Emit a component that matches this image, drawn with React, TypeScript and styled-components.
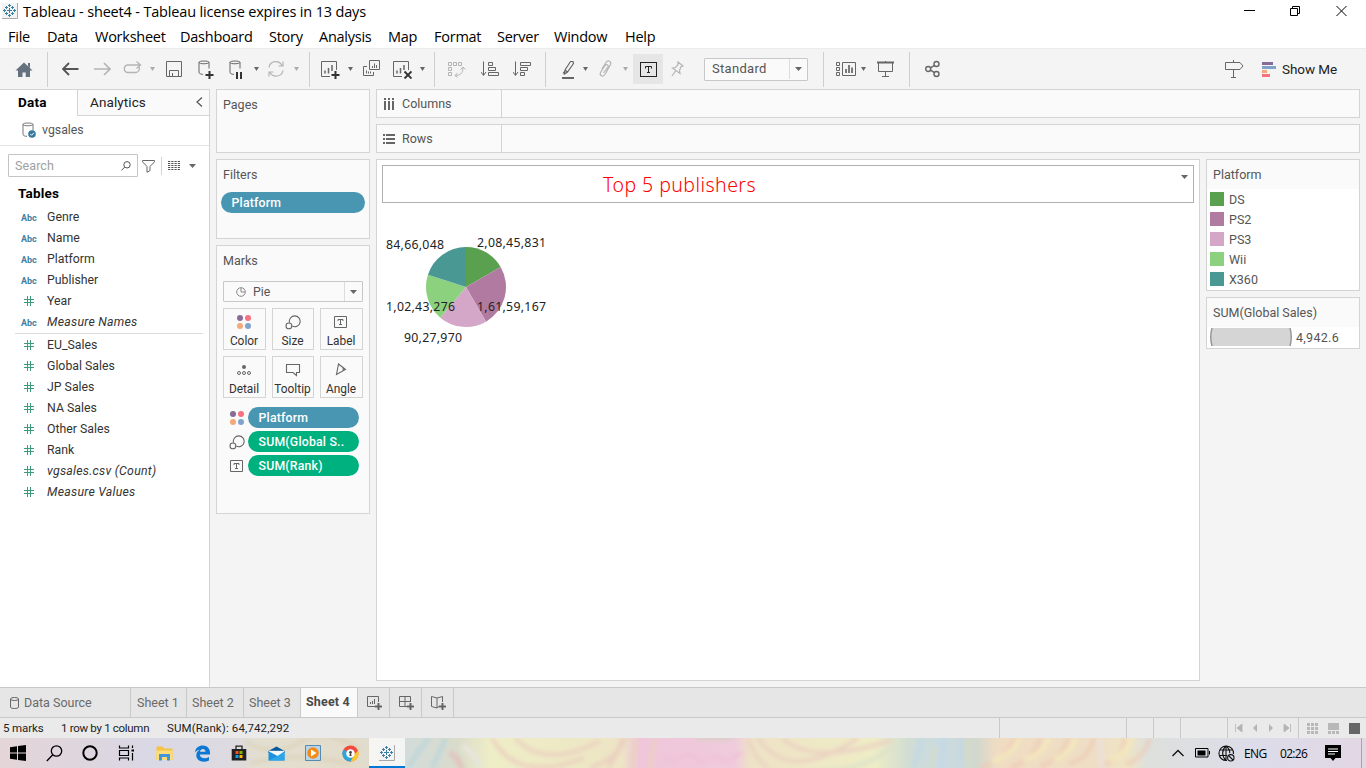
import React from "react";
import styled, { createGlobalStyle, css } from "styled-components";

const ui = `"Open Sans", "Noto Sans", sans-serif`;
const book = `Roboto, "Noto Sans", sans-serif`;

const Global = createGlobalStyle`
  * { box-sizing: border-box; }
  body { margin: 0; background: #f4f4f4; font-family: ${book}; font-size: 12px; color: #333; overflow: hidden; }
`;

const Window = styled.div`
  width: 1366px;
  height: 768px;
  display: flex;
  flex-direction: column;
`;

const Text = styled.span<{ $ls?: number; $ml?: number; $mt?: number; $w?: number }>`
  white-space: nowrap;
  letter-spacing: ${(p) => p.$ls ?? 0}px;
  margin-left: ${(p) => p.$ml ?? 0}px;
  margin-top: ${(p) => p.$mt ?? 0}px;
  ${(p) => p.$w && css`width: ${p.$w}px;`}
`;

const Icon = styled.svg<{ $ml?: number; $c?: string }>`
  display: block;
  flex: none;
  fill: none;
  stroke: ${(p) => p.$c ?? "#666"};
  margin-left: ${(p) => p.$ml ?? 0}px;
`;
const faded = "#b4b4b4";

/* ---------- title and menu ---------- */
const TitleBar = styled.header`
  height: 24px;
  flex: none;
  display: flex;
  align-items: center;
  padding: 0 19px 2px 2px;
  background: #fff;
  font: 14.5px ${ui};
  color: #000;
`;
const WindowButtons = styled.div`
  margin-left: auto;
  display: flex;
  gap: 35px;
`;
const MenuBar = styled.nav`
  height: 24px;
  flex: none;
  display: flex;
  align-items: center;
  padding: 1px 0 0 8px;
  background: #fff;
  font: 14.5px ${ui};
  color: #000;
`;
const MenuItem = styled.span<{ $w: number }>`
  width: ${(p) => p.$w}px;
  white-space: nowrap;
  letter-spacing: -0.25px;
`;

/* ---------- toolbar ---------- */
const Toolbar = styled.div`
  height: 41px;
  flex: none;
  display: flex;
  align-items: center;
  border-top: 1px solid #ececec;
  background: #f4f4f4;
`;
const Separator = styled.i<{ $ml: number; $c?: string }>`
  width: 1px;
  height: 35px;
  margin-left: ${(p) => p.$ml}px;
  background: ${(p) => p.$c ?? "#cfcfcf"};
`;
const ActiveTool = styled.div`
  width: 30px;
  height: 30px;
  margin-left: 5px;
  display: grid;
  place-items: center;
  background: #e6e6e6;
`;
const SelectBox = styled.div<{ $w: number; $h: number; $ml?: number }>`
  width: ${(p) => p.$w}px;
  height: ${(p) => p.$h}px;
  margin-left: ${(p) => p.$ml ?? 0}px;
  display: flex;
  align-items: center;
  border: 1px solid #c8c8c8;
  border-radius: 1px;
  background: #fafafa;
  font-size: 12.3px;
  color: #555;
`;
const ZoomSelect = styled(SelectBox)`
  font-size: 13px;
  padding-bottom: 1px;
`;
const SelectArrow = styled.div`
  width: 18px;
  align-self: stretch;
  margin-left: auto;
  display: grid;
  place-items: center;
  border-left: 1px solid #dcdcdc;
`;
const ShowMe = styled.div`
  margin-left: auto;
  padding-right: 29px;
  display: flex;
  align-items: center;
  font-size: 13.5px;
  color: #222;
`;

/* ---------- workspace ---------- */
const Workspace = styled.main`
  height: 598px;
  flex: none;
  display: flex;
  background: #f4f4f4;
`;
const Sidebar = styled.aside`
  width: 210px;
  flex: none;
  display: flex;
  flex-direction: column;
  background: #fff;
  border: solid #d4d4d4;
  border-width: 1px 1px 0 0;
`;
const PaneTabs = styled.div`
  height: 26px;
  flex: none;
  display: flex;
  font-size: 13.5px;
`;
const DataTab = styled.div`
  width: 77px;
  padding: 4px 0 0 18px;
  font-weight: 700;
  letter-spacing: 0.2px;
  color: #000;
`;
const AnalyticsTab = styled.div`
  flex: 1;
  display: flex;
  justify-content: space-between;
  padding: 4px 6px 0 12px;
  border: solid #d4d4d4;
  border-width: 0 0 1px 1px;
  background: #fafafa;
  color: #222;
`;
const SourceRow = styled.div`
  height: 30px;
  flex: none;
  display: flex;
  align-items: center;
  padding: 0 0 2px 22px;
  gap: 6px;
  border-bottom: 1px solid #e2e2e2;
  font-size: 12.3px;
  color: #555;
`;
const SearchRow = styled.div`
  height: 39px;
  flex: none;
  display: flex;
  align-items: center;
  padding-left: 8px;
`;
const SearchBox = styled.div`
  width: 130px;
  height: 23px;
  display: flex;
  align-items: center;
  justify-content: space-between;
  padding: 0 6px;
  border: 1px solid #c4c4c4;
  border-radius: 1px;
  font-size: 12.5px;
  color: #a0a0a0;
`;
const ThinRule = styled.i`
  width: 1px;
  height: 18px;
  margin: 0 6px;
  background: #d4d4d4;
`;
const TablesTitle = styled.h2`
  height: 21px;
  margin: 0;
  padding: 0 0 0 18px;
  font: 700 13.5px/16px ${book};
  letter-spacing: 0.2px;
  color: #000;
`;
const FieldGroup = styled.ul<{ $ruled?: boolean }>`
  list-style: none;
  margin: 0 6px 0 15px;
  padding: 0;
  ${(p) => p.$ruled && css`border-bottom: 1px solid #dcdcdc; padding-bottom: 1px;`}
`;
const FieldRow = styled.li<{ $italic?: boolean }>`
  height: 21px;
  display: flex;
  align-items: center;
  font-size: 12.3px;
  font-style: ${(p) => (p.$italic ? "italic" : "normal")};
  letter-spacing: ${(p) => (p.$italic ? 0.25 : 0)}px;
  color: #333;
`;
const FieldType = styled.span<{ $hash?: boolean }>`
  width: 32px;
  padding-left: ${(p) => (p.$hash ? 9 : 6)}px;
  padding-top: ${(p) => (p.$hash ? 1 : 2)}px;
  font: 700 9px ${book};
  letter-spacing: 0;
  color: #44819e;
  svg { display: block; }
`;

const CardColumn = styled.section<{ $w: number; $ml: number }>`
  width: ${(p) => p.$w}px;
  margin-left: ${(p) => p.$ml}px;
  display: flex;
  flex-direction: column;
  gap: 6px;
`;
const Card = styled.div<{ $h: number }>`
  height: ${(p) => p.$h}px;
  flex: none;
  border: 1px solid #d4d4d4;
  background: #fafafa;
`;
const CardTitle = styled.div`
  height: 29px;
  line-height: 29px;
  padding-left: 6px;
  font-size: 12.5px;
  color: #555;
`;
const Pill = styled.div<{ $green?: boolean; $w: number }>`
  width: ${(p) => p.$w}px;
  height: 21px;
  padding-left: 10.5px;
  border-radius: 11px;
  line-height: 22.5px;
  white-space: nowrap;
  background: ${(p) => (p.$green ? "#00b180" : "#4996b2")};
  color: #fff;
  font-size: 12.3px;
  font-weight: 500;
  letter-spacing: 0.2px;
`;
const FilterShelf = styled.div`
  padding: 3px 0 0 4px;
`;
const MarksBody = styled.div`
  padding: 6px 6px 0;
`;
const MarkGrid = styled.div`
  display: grid;
  grid-template-columns: 43px 42px 43px;
  grid-auto-rows: 42px;
  gap: 6px;
  margin: 6px 0 9px;
`;
const MarkButton = styled.div`
  display: flex;
  flex-direction: column;
  align-items: center;
  gap: 3px;
  padding: 5px 1px 0 0;
  border: 1px solid #d4d4d4;
  font-size: 11.9px;
  line-height: 16px;
  color: #333;
`;
const MarkRow = styled.div`
  display: flex;
  align-items: center;
  margin: 0 0 3px 6px;
  gap: 3px;
`;
const Shelf = styled.div`
  width: 984px;
  height: 29px;
  display: flex;
  border: 1px solid #d4d4d4;
  background: #fafafa;
  color: #555;
  font-size: 12.5px;
`;
const ShelfName = styled.div`
  width: 125px;
  display: flex;
  align-items: center;
  gap: 7px;
  padding-left: 6px;
  border-right: 1px solid #d4d4d4;
`;
const Content = styled.section`
  margin-left: 6px;
  display: flex;
  flex-direction: column;
  gap: 6px;
`;
const ViewRow = styled.div`
  display: flex;
  gap: 6px;
`;
const View = styled.div`
  width: 824px;
  height: 522px;
  padding: 5px;
  border: 1px solid #d4d4d4;
  background: #fff;
`;
const SheetTitle = styled.div`
  height: 38px;
  display: flex;
  align-items: center;
  justify-content: space-between;
  padding-left: 220px;
  border: 1px solid #b0b0b0;
  font: 300 19.5px "Noto Sans", ${book};
  color: #f00;
`;
const TitleMenu = styled.div`
  align-self: start;
  padding: 9px 5px;
`;
const LegendBody = styled.div`
  background: #fff;
  height: 101px;
`;
const LegendItem = styled.div`
  height: 20px;
  display: flex;
  align-items: center;
  gap: 5px;
  padding-left: 3px;
  font-size: 12.5px;
  color: #555;
`;
const Swatch = styled.i<{ $c: string }>`
  width: 14px;
  height: 14px;
  background: ${(p) => p.$c};
`;
const SizeBody = styled.div`
  height: 21px;
  display: flex;
  align-items: center;
  gap: 4px;
  padding: 0 0 1px 3px;
  background: #fff;
  font-size: 12.5px;
  letter-spacing: 0.3px;
  color: #555;
`;

/* ---------- footer ---------- */
const SheetTabs = styled.div`
  height: 31px;
  flex: none;
  display: flex;
  border: solid #c9c9c9;
  border-width: 1px 0;
  background: #e6e6e6;
`;
const SheetTab = styled.div<{ $w: number; $pl: number; $active?: boolean }>`
  width: ${(p) => p.$w}px;
  padding: 0 0 ${(p) => (p.$active ? 2 : 0)}px ${(p) => p.$pl}px;
  display: flex;
  align-items: center;
  gap: 5px;
  white-space: nowrap;
  border-right: 1px solid #c9c9c9;
  background: ${(p) => (p.$active ? "#fafafa" : "transparent")};
  font-size: 12.5px;
  font-weight: ${(p) => (p.$active ? 700 : 400)};
  letter-spacing: ${(p) => (p.$active ? 0.15 : 0)}px;
  color: ${(p) => (p.$active ? "#4a4a4a" : "#6a6a6a")};
`;
const StatusBar = styled.div`
  height: 20px;
  flex: none;
  display: flex;
  align-items: center;
  padding-left: 3px;
  background: #eaeaea;
  font-size: 11.5px;
  color: #222;
`;
const StatusText = styled.span<{ $w: number; $ls?: number }>`
  width: ${(p) => p.$w}px;
  white-space: nowrap;
  letter-spacing: ${(p) => p.$ls ?? 0}px;
`;
const StatusCell = styled.div<{ $w: number }>`
  width: ${(p) => p.$w}px;
  height: 20px;
  display: flex;
  align-items: center;
  border-left: 1px solid #c9c9c9;
`;
const Taskbar = styled.footer`
  height: 30px;
  flex: none;
  position: relative;
  overflow: hidden;
`;
const Wallpaper = styled.svg`
  display: block;
`;
const TaskItems = styled.div`
  position: absolute;
  inset: 0;
  display: flex;
  align-items: center;
  font: 12px ${ui};
  color: #000;
`;
const TaskButton = styled.div<{ $w: number; $on?: boolean }>`
  width: ${(p) => p.$w}px;
  height: 30px;
  display: grid;
  place-items: center;
  ${(p) => p.$on && css`background: rgba(255,255,255,.72); border-bottom: 2px solid #0078d7; padding-top: 1px;`}
`;
const Tray = styled.div`
  margin-left: auto;
  width: 194px;
  height: 30px;
  display: flex;
  align-items: center;
`;

/* ---------- shared drawings ---------- */
const Caret = ({ ml = 0, c = "#666", w = 5 }: { ml?: number; c?: string; w?: number }) => (
  <Icon $ml={ml} $c="none" width={w} height="4" viewBox="0 0 7 4" preserveAspectRatio="none"><path d="M0 0h7L3.5 4z" fill={c} /></Icon>
);
const LogoMark = () => (
  <svg width="16" height="16" viewBox="0 0 16 16" fill="none" stroke="#3c7fa3" strokeWidth="1">
    <path d="M0 0h16v16H0z" fill="#f3f3f3" stroke="none" />
    <path d="M15.5 0v15.5H0" stroke="#aaa" />
    <path d="M7.5 5v5M5 7.5h5M7.5 1v3M6 2.500h3M7.500 11v3M6 12.500h3M2.500 6v3M1 7.500h3M12.500 6v3M11 7.500h3M4.500 3v3M3 4.500h3M10.500 3v3M9 4.500h3M4.500 9v3M3 10.500h3M10.500 9v3M9 10.500h3" />
  </svg>
);
const Dots = () => (
  <svg width="16" height="16" viewBox="0 0 16 16">
    <circle cx="4" cy="4" r="3" fill="#866c96" /><circle cx="12" cy="4" r="3" fill="#f9707e" />
    <circle cx="4" cy="12" r="3" fill="#f5a878" /><circle cx="12" cy="12" r="3" fill="#80a2cb" />
  </svg>
);
const SizeGlyph = () => (
  <svg width="16" height="16" viewBox="0 0 16 16" fill="none" stroke="#666" strokeWidth="1.1">
    <path d="M4.500 8.600a5.400 5.400 0 1 1 2.800 3.500" /><circle cx="3.900" cy="11.900" r="2.900" />
  </svg>
);
const LabelGlyph = ({ w = 14, h = 12, c = "#666" }: { w?: number; h?: number; c?: string }) => (
  <svg width={w} height={h} viewBox={`0 0 ${w} ${h}`} fill="none" stroke={c}>
    <rect x=".5" y=".5" width={w - 1} height={h - 1} />
    <path d={`M${w / 2 - 3} ${h / 2 - 1}v-2h6v2M${w / 2} ${h / 2 - 3}v6M${w / 2 - 1.5} ${h / 2 + 3}h3`} />
  </svg>
);
const SmallLabelGlyph = () => (
  <svg width="16" height="16" viewBox="-1 -2 16 16" fill="none" stroke="#666"><path d="M.5.5h12v11H.5zM4 5V3.500h5V5M6.500 3.500v5.500M5 8.500h3" /></svg>
);
const Cylinder = () => <path d="M1 3.300v10c0 1.300 1.500 1.900 4 2.100M11 3.300v6.200M1 3.300C1 1.600 11 1.600 11 3.300S1 5.500 1 3.300z" />;
const Hash = () => (
  <svg width="10" height="10" viewBox="0 0 10 10" stroke="#3a9c7b" strokeWidth="1"><path d="M3.500 0v10M6.500 0v10M0 3.500h10M0 6.500h10" /></svg>
);

const dimensions = ["Genre", "Name", "Platform", "Publisher", "Year", "Measure Names"];
const measures = ["EU_Sales", "Global Sales", "JP Sales", "NA Sales", "Other Sales", "Rank", "vgsales.csv (Count)", "Measure Values"];
const italics = ["Measure Names", "vgsales.csv (Count)", "Measure Values"];
const menu: [string, number][] = [
  ["File", 39], ["Data", 48], ["Worksheet", 85], ["Dashboard", 89], ["Story", 50],
  ["Analysis", 69], ["Map", 46], ["Format", 63], ["Server", 57], ["Window", 71], ["Help", 40],
];
const platforms: [string, string][] = [["DS", "#59a14f"], ["PS2", "#b07aa1"], ["PS3", "#d4a6c8"], ["Wii", "#8cd17d"], ["X360", "#499894"]];

const slices: [string, number, number][] = [["#59a14f", 0, 60], ["#b07aa1", 60, 150], ["#d4a6c8", 150, 220], ["#8cd17d", 220, 288], ["#499894", 288, 360]];
const point = (deg: number) => {
  const r = (deg * Math.PI) / 180;
  return `${84 + 40 * Math.sin(r)} ${84 - 40 * Math.cos(r)}`;
};
const labels: [string, number, number, number][] = [
  ["84,66,048", 4, 46, 58], ["2,08,45,831", 95, 44, 69], ["1,02,43,276", 4, 108, 69], ["1,61,59,167", 95, 108, 69], ["90,27,970", 22, 139, 58],
];

const Chart = styled.svg`
  display: block;
  font: 12.3px "Noto Sans", sans-serif;
`;
const PieChart = () => (
  <Chart width="200" height="160" viewBox="0 0 200 160">
    {slices.map(([c, a, b]) => <path key={c} d={`M84 84L${point(a)}A40 40 0 0 1 ${point(b)}z`} fill={c} />)}
    {labels.map(([t, x, y, w]) => <text key={t} x={x} y={y} textLength={w} fill="#222">{t}</text>)}
  </Chart>
);

const MainToolbar = () => (
  <Toolbar>
    <Icon $ml={15} $c="none" width="18" height="20"><path d="M9 3.500 17.500 11.500H15V18h-4.300v-4.500H7.500V18H3v-6.500H.5zM13 4h2v5l-2-2z" fill="#64717f" /></Icon>
    <Separator $ml={14} />
    <Icon $ml={14} $c="#555" width="17" height="20" strokeWidth="1.800"><path d="M1 10h15.500M7 4 1 10l6 6" /></Icon>
    <Icon $ml={15} $c={faded} width="17" height="20" strokeWidth="1.600"><path d="M0 10h15.500M10 4l6 6-6 6" /></Icon>
    <Icon $ml={12} $c={faded} width="19" height="20" strokeWidth="1.300"><path d="M9 6H4.500a3.800 3.800 0 0 0 0 7.500H13A3.800 3.800 0 0 0 16 8M8 6h9M13.500 2.500 17.500 6l-4 3.500" /></Icon>
    <Caret ml={8} c="#aaa" />
    <Icon $ml={11} width="16" height="20"><path d="M.5 2.500h15v15H.5zM3.500 17.500v-6h9v6M6.500 14v3.500" /></Icon>
    <Icon $ml={16} width="16" height="20"><Cylinder /><path d="M11.500 12v8M7.500 16h8" stroke="#333" strokeWidth="2" /></Icon>
    <Icon $ml={15} width="16" height="20"><Cylinder /><path d="M8 13v7M12 13v7" stroke="#333" strokeWidth="2" /></Icon>
    <Caret ml={9} />
    <Icon $ml={8} $c={faded} width="18" height="20" strokeWidth="1.200"><path d="M2 8.500C3 1.500 12 .5 15 6.500M16 11.500c-1 6.500-10 7.500-13 2M16 2.500v4.500h-4.500M2 17.500v-4.500h4.500" /></Icon>
    <Caret ml={9} c="#aaa" />
    <Separator $ml={10} />
    <Icon $ml={10} width="20" height="20"><path d="M10 17.500H1.500V2.500h15V11" /><path d="M5 14.500v-3M8.500 14.500V9M12 12V6" strokeWidth="1.500" /><path d="M15.500 12v8M11.500 16h8" stroke="#333" strokeWidth="2" /></Icon>
    <Caret ml={8} />
    <Icon $ml={10} width="18" height="20"><path d="M6.500 1.500h10v9h-10zM4 7.500H.5v9h10V13M9.500 9V7M11.500 9V4.500M13.500 9V6M3.500 14.500v-3M5.500 14.500v-2M7.500 14.500v-2" /></Icon>
    <Icon $ml={12} width="19" height="20"><path d="M9 17.500H.5V2.500h15V11" /><path d="M4 14.500v-3M7.500 14.500V9M11 11V6" strokeWidth="1.500" /><path d="m11.500 12.500 7 7m0-7-7 7" stroke="#333" strokeWidth="1.900" /></Icon>
    <Caret ml={8} />
    <Separator $ml={9} />
    <Icon $ml={13} $c={faded} width="18" height="20"><path d="M.5 3.500h3v3h-3zM5.500 3.500h3v3h-3zM10.500 3.500h3v3h-3zM.5 8.500h3v3h-3zM.5 13.500h3v3h-3zM7 16.500c5 0 8-2 8-8M9.500 14 7 16.500l2.500 2M12.500 10.500l2.500-2.500 2.500 2.500" /></Icon>
    <Icon $ml={15} width="18" height="20"><path d="M2.500 2.500V16M0 13l2.500 3.500L5 13M7.500 3.500h4v3h-4zM7.500 8.500h7v3h-7zM7.500 13.500h10v3h-10z" /></Icon>
    <Icon $ml={14} width="18" height="20"><path d="M2.500 2.500V16M0 13l2.500 3.500L5 13M7.500 3.500h10v3h-10zM7.500 8.500h7v3h-7zM7.500 13.500h4v3h-4z" /></Icon>
    <Separator $ml={14} />
    <Icon $ml={16} width="13" height="20"><path d="m3 11 5.500-8.500h2.500l.5 2-6 8.500-3 2zM3 11l2.500 2M1 14.500l1.500-2" strokeWidth="1.200" /><path d="M0 19h12" strokeWidth="2" /></Icon>
    <Caret ml={8} />
    <Icon $ml={11} $c={faded} width="13" height="20" strokeWidth="1.200"><path d="m3 10 4-6.500c2-3 6-1 4.500 2L6 15.500c-2 3-6 1-4.500-2L6 6.500c1.500-2 4-.5 3 1.500L4.500 14" /></Icon>
    <Caret ml={11} c="#aaa" />
    <ActiveTool><LabelGlyph w={17} h={15} c="#222" /></ActiveTool>
    <Icon $ml={8} $c={faded} width="13" height="20" strokeWidth="1.200"><path d="m7 3 5 4-2 .5-1.500 4 .5 3-7.500-5.500 3-.5L7 5.500zM4.500 12 1 17" /></Icon>
    <ZoomSelect $ml={20} $w={104} $h={23}><Text $ml={7} $ls={0.3}>Standard</Text><SelectArrow><Caret w={7} /></SelectArrow></ZoomSelect>
    <Separator $ml={15} />
    <Icon $ml={12} width="20" height="20"><path d="M.5 3.500h3v3h-3zM.5 8.500h3v3h-3zM.5 13.500h3v3h-3zM6.500 3.500h13v13h-13z" /><path d="M10 14v-4M13 14V6M16 14V8.500" strokeWidth="1.700" /></Icon>
    <Caret ml={5} />
    <Icon $ml={11} width="17" height="20"><path d="M0 3.500h17" strokeWidth="2" /><path d="M1.500 4v8.500h14V4M8.500 2v1M8.500 13v4.500M5 17.500h7" /></Icon>
    <Separator $ml={15} />
    <Icon $ml={15} width="15" height="20" strokeWidth="1.400"><circle cx="3.200" cy="10" r="2.500" /><circle cx="11.500" cy="5" r="2.500" /><circle cx="11.500" cy="15" r="2.500" /><path d="m5.500 8.800 4-2.500M5.500 11.200l4 2.500" /></Icon>
    <ShowMe>
      <Icon width="19" height="20"><path d="M.5 3.500H15l3 3.500-3 3.500H.5zM8.500 1v2M8.500 11v7.500M6 18.500h5" /></Icon>
      <Icon $ml={18} $c="none" width="14" height="16"><path d="M0 1h11v3H0z" fill="#866c96" /><path d="M0 5h14v3H0z" fill="#80a2cb" /><path d="M0 9h5v3H0z" fill="#f5a878" /><path d="M0 13h8v3H0z" fill="#f9707e" /></Icon>
      <Text $ml={6} $ls={-0.1}>Show Me</Text>
    </ShowMe>
  </Toolbar>
);

const DataPane = () => (
  <Sidebar>
    <PaneTabs>
      <DataTab>Data</DataTab>
      <AnalyticsTab><Text $ls={0.1}>Analytics</Text><svg width="7" height="14" viewBox="0 -3 7 14" fill="none" stroke="#555" strokeWidth="1.200"><path d="M6 .5 1 5l5 4.500" /></svg></AnalyticsTab>
    </PaneTabs>
    <SourceRow>
      <svg width="14" height="18" viewBox="0 0 14 18" fill="none" stroke="#777"><Cylinder /><circle cx="10" cy="13" r="3.800" fill="#35799c" stroke="none" /><path d="m8.300 13 1.300 1.300 2.200-2.500" stroke="#fff" /></svg>
      <Text>vgsales</Text>
    </SourceRow>
    <SearchRow>
      <SearchBox><Text $ls={0.1}>Search</Text><svg width="10" height="10" viewBox="0 0 10 10" fill="none" stroke="#555"><circle cx="6" cy="3.800" r="3.200" /><path d="M3.700 6.200.5 9.300" /></svg></SearchBox>
      <Icon $ml={4} width="13" height="14"><path d="M.5 1.500h12v1.300L8 7.500v4l-3 1.800V7.500L.5 2.800z" /></Icon>
      <ThinRule />
      <Icon width="12" height="9" $c="#555" strokeDasharray="2.250 1"><path d="M0 .5h12M0 2.500h12M0 4.500h12M0 6.500h12M0 8.500h12" /></Icon>
      <Caret ml={9} w={7} />
    </SearchRow>
    <TablesTitle>Tables</TablesTitle>
    <FieldGroup $ruled>
      {dimensions.map((d) => (
        <FieldRow key={d} $italic={italics.includes(d)}><FieldType $hash={d === "Year"}>{d === "Year" ? <Hash /> : "Abc"}</FieldType>{d}</FieldRow>
      ))}
    </FieldGroup>
    <FieldGroup>
      {measures.map((m) => (
        <FieldRow key={m} $italic={italics.includes(m)}><FieldType $hash><Hash /></FieldType>{m}</FieldRow>
      ))}
    </FieldGroup>
  </Sidebar>
);

const Cards = () => (
  <CardColumn $w={154} $ml={6}>
    <Card $h={64}><CardTitle>Pages</CardTitle></Card>
    <Card $h={80}><CardTitle>Filters</CardTitle><FilterShelf><Pill $w={144}>Platform</Pill></FilterShelf></Card>
    <Card $h={269}>
      <CardTitle>Marks</CardTitle>
      <MarksBody>
        <SelectBox $w={140} $h={21}>
          <Icon $ml={12} $c="#888" width="10" height="10"><circle cx="5" cy="5" r="4.300" /><path d="M5 1v4h4" /></Icon>
          <Text $ml={7}>Pie</Text>
          <SelectArrow><Caret w={7} /></SelectArrow>
        </SelectBox>
        <MarkGrid>
          <MarkButton><Dots />Color</MarkButton>
          <MarkButton><SizeGlyph />Size</MarkButton>
          <MarkButton><SmallLabelGlyph />Label</MarkButton>
          <MarkButton><svg width="16" height="16" viewBox="0 0 16 16" fill="none" stroke="#666"><circle cx="8" cy="5" r="2" fill="#666" stroke="none" /><circle cx="3" cy="11" r="1.500" /><circle cx="8" cy="11" r="1.500" /><circle cx="13" cy="11" r="1.500" /></svg>Detail</MarkButton>
          <MarkButton><svg width="16" height="16" viewBox="0 0 16 16" fill="none" stroke="#666" strokeWidth="1.100"><path d="M1.500 2.500h13v8h-3v3l-3.500-3H1.500z" /></svg>Tooltip</MarkButton>
          <MarkButton><svg width="16" height="16" viewBox="0 0 16 16" fill="none" stroke="#666" strokeWidth="1.100"><path d="M5.500 2 12.500 7.500 3.500 12.500zM10 5q.5 2 0 4" /></svg>Angle</MarkButton>
        </MarkGrid>
        <MarkRow><Dots /><Pill $w={111}>Platform</Pill></MarkRow>
        <MarkRow><SizeGlyph /><Pill $w={111} $green>SUM(Global S..</Pill></MarkRow>
        <MarkRow><SmallLabelGlyph /><Pill $w={111} $green>SUM(Rank)</Pill></MarkRow>
      </MarksBody>
    </Card>
  </CardColumn>
);

const Wall = () => (
  <Wallpaper width="1366" height="30" viewBox="0 0 1366 30">
    <defs>
      <linearGradient id="wall" x1="0" x2="1366" y1="0" y2="0" gradientUnits="userSpaceOnUse">
        <stop offset="0" stopColor="#e4d5d8" /><stop offset=".07" stopColor="#ddd6df" /><stop offset=".11" stopColor="#d9d8e5" />
        <stop offset=".17" stopColor="#dddae0" /><stop offset=".19" stopColor="#e3dfd0" /><stop offset=".26" stopColor="#e3dccb" />
        <stop offset=".3" stopColor="#d3dcda" /><stop offset=".335" stopColor="#dadccb" /><stop offset=".36" stopColor="#eeeec6" />
        <stop offset=".44" stopColor="#ede6c4" /><stop offset=".455" stopColor="#eee4c6" /><stop offset=".468" stopColor="#efc6da" />
        <stop offset=".538" stopColor="#efcbdc" /><stop offset=".55" stopColor="#eee3c6" /><stop offset=".64" stopColor="#eeedc5" />
        <stop offset=".665" stopColor="#d1ddd3" /><stop offset=".69" stopColor="#c9dbe3" /><stop offset=".715" stopColor="#d2d8cd" />
        <stop offset=".73" stopColor="#f0dcc2" /><stop offset=".8" stopColor="#eedec5" /><stop offset=".825" stopColor="#efe4c4" />
        <stop offset=".84" stopColor="#dde0dc" /><stop offset=".92" stopColor="#dddcea" /><stop offset="1" stopColor="#e2d7e3" />
      </linearGradient>
      <filter id="soft" x="-5%" y="-50%" width="110%" height="200%"><feGaussianBlur stdDeviation="2.200" /></filter>
    </defs>
    <path fill="url(#wall)" d="M0 0h1366v30H0z" />
    <g filter="url(#soft)" fill="none">
      <path d="M245 4q30 16 55 0t60 8M250 26q40-14 100 0" stroke="#dbd1b8" strokeWidth="3" />
      <path d="M408 30q15-25 22-30M432 30l14-30" stroke="#c0d6d8" strokeWidth="5" />
      <path d="M450 14q10 8 12 18" stroke="#e0c4c0" strokeWidth="6" /><path d="M462 8q14 8 18 22" stroke="#e6e6dc" strokeWidth="6" />
      <path d="M492 0q25 46 92 20M515 0q30 32 85 3" stroke="#ebd2c0" strokeWidth="4" />
      <path d="m608 30 18-30M590 30q30-10 32-30M632 30l4-30M650 30l5-30" stroke="#ead0c0" strokeWidth="4" />
      <path d="M697 0h35" stroke="#d5cfc2" strokeWidth="4" />
      <path d="M664 18l10 5 14-8 12 9 15-6 12 6 15-10" stroke="#f0c0d8" strokeWidth="3" />
      <path d="M748 0q6 20 20 30M758 0q30 46 100 0M782 0q30 28 110 2" stroke="#ebd3c2" strokeWidth="4" />
      <path d="M808 34q60 0 90-30" stroke="#dde2c9" strokeWidth="4" />
      <path d="M922 0l-8 30M944 0l-4 30M960 0v30" stroke="#c4d8e4" strokeWidth="5" />
      <path d="M935 8l-3 22M968 0v30" stroke="#d6dac6" strokeWidth="4" />
      <path d="M980 30q28-10 34-30M1010 30q24-8 30-30M1040 28q22-6 28-28M1068 26q20-4 26-26M1100 28q20-4 25-28M1126 26q18-6 24-26" stroke="#eec6b4" strokeWidth="4" opacity=".7" />
      <path d="M992 24q22-8 28-24M1024 22q20-6 25-22M1054 22q16-6 22-22M1110 22q16-6 22-22" stroke="#f3e8bd" strokeWidth="5" />
      <path d="M1099 0l4 30" stroke="#ecdfe0" strokeWidth="4" />
    </g>
  </Wallpaper>
);

const WindowsTaskbar = () => (
  <Taskbar>
    <Wall />
    <TaskItems>
      <TaskButton $w={36}><svg width="16" height="16" viewBox="0 0 16 16"><path d="M0 2.300 7 1.300v6.200H0zM8 1.100 16 0v7.500H8zM0 8.500h7v6.200l-7-1zM8 8.500h8V16l-8-1.100z" /></svg></TaskButton>
      <TaskButton $w={36}><svg width="17" height="17" viewBox="0 0 17 17" fill="none" stroke="#000" strokeWidth="1.300"><circle cx="10.500" cy="6" r="5.200" /><path d="M6.800 9.700.8 16" /></svg></TaskButton>
      <TaskButton $w={36}><svg width="16" height="16" viewBox="0 0 16 16" fill="none" stroke="#000" strokeWidth="2"><circle cx="8" cy="8" r="6.700" /></svg></TaskButton>
      <TaskButton $w={36}><svg width="17" height="16" viewBox="0 0 17 16" fill="none" stroke="#000" strokeWidth="1.200"><path d="M1.500.5V3h9V.5M1.500 5.500h9v5h-9zM1.500 15.500V13h9v2.500M14.500.5v2.500M14.500 8v7.500" /><path d="M13.500 5.500h2.500" strokeWidth="2" /></svg></TaskButton>
      <TaskButton $w={41}><svg width="17" height="15" viewBox="0 0 17 15"><path d="M.5.5h6l1.500 2h8.500V14H.5z" fill="#f5c343" /><path d="M.5 4.500h16V14H.5z" fill="#fddc7a" /><path d="M3 14.500V8h11v6.500h-3V11H6v3.500z" fill="#3f96dc" /></svg></TaskButton>
      <TaskButton $w={34}><svg width="17" height="17" viewBox="0 0 17 17"><path d="M1 7.500C1.500 2.500 5 .5 8.700.5c4.800 0 7.300 3.500 7.300 7v2H5.800c.2 4 5.500 4.700 9.200 2.500v3.500C9 18.500 2 16 2.300 10c.1-2.500 1.500-4.300 3.500-5.300C3.500 5 2 6 1 7.500zM6 6.800h5.500C11.500 3.200 6.500 3 6 6.800z" fill="#0a78d4" /></svg></TaskButton>
      <TaskButton $w={39}><svg width="16" height="16" viewBox="0 0 16 16"><path d="M.7 4h14.600v11.500H.7z" fill="#222" /><path d="M5 4V1.200h6V4" fill="none" stroke="#222" strokeWidth="1.300" /><path d="M4.500 6h3v3h-3z" fill="#f25022" /><path d="M8.500 6h3v3h-3z" fill="#7fba00" /><path d="M4.500 10h3v3h-3z" fill="#00a4ef" /><path d="M8.500 10h3v3h-3z" fill="#ffb900" /></svg></TaskButton>
      <TaskButton $w={36}><svg width="17" height="15" viewBox="0 0 17 15"><path d="M.5 5 8.500.5l8 4.500v2H.5z" fill="#075a9f" /><path d="M1 4.800h15v5H1z" fill="#f4f6f8" /><path d="m.5 5.200 9.500 5 6.500-5v9.300H.5z" fill="#1c91df" /><path d="m.5 14.500 9-4.500 7-4.500v9z" fill="#2ba6e8" /></svg></TaskButton>
      <TaskButton $w={38}><svg width="16" height="16" viewBox="0 0 16 16"><path d="M.5.5h15v15H.5z" fill="#b7d6ec" stroke="#568ab1" /><circle cx="8" cy="8" r="5.800" fill="#f28b18" /><path d="m6 4.500 5.500 3.500L6 11.500z" fill="#fff" /></svg></TaskButton>
      <TaskButton $w={37}><svg width="17" height="17" viewBox="0 0 17 17"><circle cx="8.500" cy="8.500" r="8" fill="#f04b3c" /><path d="M1.500 4.500A8 8 0 0 0 8.500 16.500l3.500-6z" fill="#2ba6de" /><path d="M16 5.500a8 8 0 0 1-7.500 11l4-7z" fill="#ffc825" /><circle cx="8.500" cy="8.500" r="4.300" fill="#fff" /><circle cx="8.500" cy="7.300" r="1.300" fill="#444" /><path d="M8 7.500h1l.6 3.500H7.400z" fill="#444" /></svg></TaskButton>
      <TaskButton $w={36} $on><LogoMark /></TaskButton>
      <Tray>
        <Icon $c="#111" width="12" height="8" strokeWidth="1.300"><path d="M.5 7 6 1.500 11.500 7" /></Icon>
        <Icon $ml={11} $c="#000" width="15" height="10"><path d="M.5.5h12.500v8.500H.5zM14.500 3v3.500" /><path d="M2.500 2.500h8v5h-8z" fill="#000" stroke="none" /></Icon>
        <Icon $ml={8} $c="#111" width="17" height="17" strokeWidth="1.100"><path d="M9 15.500A7.300 7.300 0 1 1 15.500 9M8 .8C3.500 5 3.500 11 8 15.500M8 .8c3 2.500 4 5 3.800 7.500M1.500 5h13M1 10.500h8M8 .8v14.500" /><circle cx="12.800" cy="12.800" r="3.200" /><path d="m10.500 10.500 4.500 4.500" /></Icon>
        <Text $ml={9} $w={36} $ls={-0.6}>ENG</Text>
        <Text $w={45} $ls={-0.7}>02:26</Text>
        <Icon $c="none" width="16" height="17"><path d="M0 0h16v13h-5.500L8 16l-2.500-3H0z" fill="#000" /><path d="M3 4h10M3 6.500h10M3 9h7" stroke="#fff" /></Icon>
        <Separator $ml={20} $c="#aaa4ad" />
      </Tray>
    </TaskItems>
  </Taskbar>
);

export default function App() {
  return (
    <Window>
      <Global />
      <TitleBar>
        <LogoMark />
        <Text $ml={5} $ls={-0.17}>Tableau - sheet4 - Tableau license expires in 13 days</Text>
        <WindowButtons>
          <Icon $c="#000" width="11" height="11"><path d="M0 4.500h11" /></Icon>
          <Icon $c="#000" width="11" height="11"><path d="M.5 2.500h7v7h-7zM2.500 2.500v-2h7v7h-2" /></Icon>
          <Icon $c="#000" width="11" height="11"><path d="m.5 0 10 10m0-10-10 10" /></Icon>
        </WindowButtons>
      </TitleBar>
      <MenuBar>{menu.map(([t, w]) => <MenuItem key={t} $w={w}>{t}</MenuItem>)}</MenuBar>
      <MainToolbar />
      <Workspace>
        <DataPane />
        <Cards />
        <Content>
          <Shelf><ShelfName><svg width="12" height="12" viewBox="0 0 12 12" fill="#666"><path d="M1 0h2v2H1zM5 0h2v2H5zM9 0h2v2H9zM1 3h2v9H1zM5 3h2v9H5zM9 3h2v9H9z" /></svg><Text>Columns</Text></ShelfName></Shelf>
          <Shelf><ShelfName><svg width="12" height="12" viewBox="0 0 12 12" fill="#666"><path d="M0 1h2v2H0zM3 1h9v2H3zM0 5h2v2H0zM3 5h9v2H3zM0 9h2v2H0zM3 9h9v2H3z" /></svg><Text>Rows</Text></ShelfName></Shelf>
          <ViewRow>
            <View>
              <SheetTitle><Text $ls={0.45}>Top 5 publishers</Text><TitleMenu><Caret w={7} /></TitleMenu></SheetTitle>
              <PieChart />
            </View>
            <CardColumn $w={154} $ml={0}>
              <Card $h={132}>
                <CardTitle>Platform</CardTitle>
                <LegendBody>{platforms.map(([n, c]) => <LegendItem key={n}><Swatch $c={c} />{n}</LegendItem>)}</LegendBody>
              </Card>
              <Card $h={52}>
                <CardTitle>SUM(Global Sales)</CardTitle>
                <SizeBody><svg width="82" height="18" viewBox="0 0 82 18"><path d="M1 0h80v18H1z" fill="#d5d5d5" /><path d="M2 0Q-.5 9 2 18M80 0q2.500 9 0 18" fill="none" stroke="#999" strokeWidth="1.500" /></svg>4,942.6</SizeBody>
              </Card>
            </CardColumn>
          </ViewRow>
        </Content>
      </Workspace>
      <SheetTabs>
        <SheetTab $w={131} $pl={10}><svg width="9" height="12" viewBox="0 0 9 12" fill="none" stroke="#666"><path d="M.5 2v8c0 2 8 2 8 0V2c0-2-8-2-8 0s8 2 8 0" /></svg>Data Source</SheetTab>
        <SheetTab $w={56} $pl={6}>Sheet 1</SheetTab>
        <SheetTab $w={57} $pl={5}>Sheet 2</SheetTab>
        <SheetTab $w={57} $pl={5}>Sheet 3</SheetTab>
        <SheetTab $w={57} $pl={5} $active>Sheet 4</SheetTab>
        <SheetTab $w={32} $pl={9}><Icon width="16" height="16"><path d="M8 11.500H.5V1.500h11V7M3.500 9V7M5.500 9V6M7.500 9V4" /><path d="M11.500 8v7M8 11.500h7" strokeWidth="2" /></Icon></SheetTab>
        <SheetTab $w={32} $pl={9}><Icon width="16" height="16"><path d="M8 11.500H.5V1.500h11V7M.5 6.500h11M6 1.500v10" /><path d="M11.500 8v7M8 11.500h7" strokeWidth="2" /></Icon></SheetTab>
        <SheetTab $w={32} $pl={9}><Icon width="16" height="16"><path d="M8 11.500 6 13 .5 11.500v-10L6 3l5.500-1.500V7M6 3v10" /><path d="M11.500 8v7M8 11.500h7" strokeWidth="2" /></Icon></SheetTab>
      </SheetTabs>
      <StatusBar>
        <StatusText $w={58} $ls={-0.1}>5 marks</StatusText>
        <StatusText $w={106} $ls={-0.3}>1 row by 1 column</StatusText>
        <StatusText $w={832} $ls={0.13}>SUM(Rank): 64,742,292</StatusText>
        <StatusCell $w={127} /><StatusCell $w={27} /><StatusCell $w={27} /><StatusCell $w={47} />
        <StatusCell $w={71}>
          {["M.5 0v8M7 0v8L2 4z", "M6 0v8L2 4z", "M2 0v8l4-4z", "M7.500 0v8M1 0v8l5-4z"].map((d, i) => <Icon key={d} $ml={i ? 8 : 7} $c={i % 3 ? "none" : faded} width="8" height="8"><path d={d} fill={faded} strokeWidth=".8" /></Icon>)}
        </StatusCell>
        <StatusCell $w={68}>
          <Icon $ml={8} $c="none" width="11" height="11"><path d="M0 0h3v3H0zM4 0h3v3H4zM8 0h3v3H8zM0 4h3v3H0zM4 4h3v3H4zM8 4h3v3H8zM0 8h3v3H0zM4 8h3v3H4zM8 8h3v3H8z" fill="#b8b8b8" /></Icon>
          <Icon $ml={10} $c="none" width="11" height="11"><path d="M0 0h11v7H0zM0 8h3v3H0zM4 8h3v3H4zM8 8h3v3H8z" fill="#b8b8b8" /></Icon>
          <Icon $ml={10} $c="none" width="11" height="11"><path d="M0 0h11v11H0z" fill="#666" /></Icon>
        </StatusCell>
      </StatusBar>
      <WindowsTaskbar />
    </Window>
  );
}
